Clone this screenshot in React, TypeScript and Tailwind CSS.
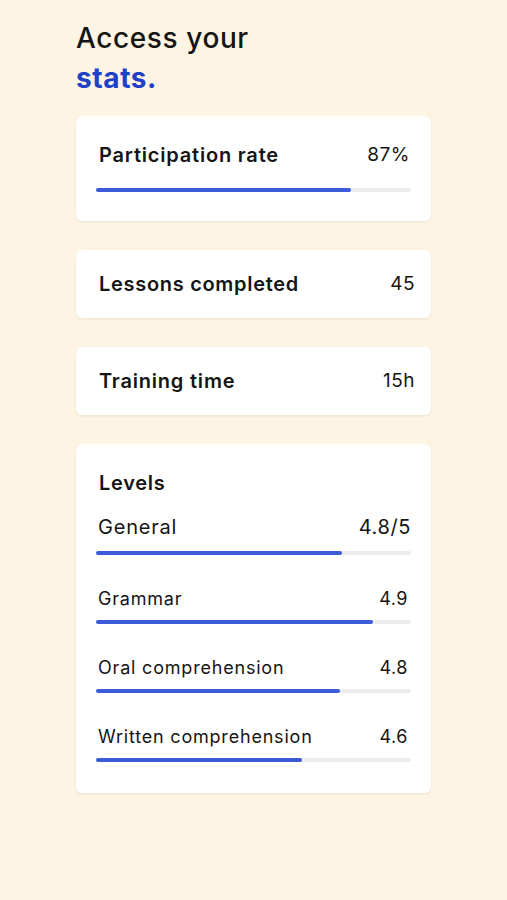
const levels = [
  { label: 'Grammar', value: '4.9', pct: 88 },
  { label: 'Oral comprehension', value: '4.8', pct: 77.5 },
  { label: 'Written comprehension', value: '4.6', pct: 65.5 },
];

const Bar = ({ pct }: { pct: number }) => (
  <div className="h-[4px] w-full rounded-full bg-[#ececec]">
    <div className="h-full rounded-full bg-[#3d5bd8]" style={{ width: `${pct}%` }} />
  </div>
);

export default function App() {
  return (
    <div className="min-h-[900px] bg-[#fdf4e3] font-['Inter',sans-serif] text-[#151515]">
      <div className="mx-auto w-[355px] pt-[18px]">
        <h1 className="text-[28px] leading-[40px] font-medium tracking-[0.6px]">
          Access your
          <br />
          <span className="font-bold text-[#2040c8]">stats.</span>
        </h1>

        <div className="mt-[18px] flex flex-col gap-[29px]">
          <div className="rounded-md bg-white px-[20px] pt-[27px] pb-[29px] shadow-[0_1px_3px_rgba(0,0,0,0.08)]">
            <div className="flex items-center justify-between pr-[1px] pl-[3px] leading-[24px]">
              <span className="text-[20px] font-semibold tracking-[0.8px]">Participation rate</span>
              <span className="text-[19px] tracking-[0.5px]">87%</span>
            </div>
            <div className="mt-[21px]">
              <Bar pct={81} />
            </div>
          </div>

          <div className="flex h-[68px] items-center justify-between rounded-md bg-white pr-[16px] pl-[23px] leading-[24px] shadow-[0_1px_3px_rgba(0,0,0,0.08)]">
            <span className="text-[20px] font-semibold tracking-[0.7px]">Lessons completed</span>
            <span className="text-[19px] tracking-[0.5px]">45</span>
          </div>

          <div className="flex h-[68px] items-center justify-between rounded-md bg-white pr-[16px] pl-[23px] leading-[24px] shadow-[0_1px_3px_rgba(0,0,0,0.08)]">
            <span className="text-[20px] font-semibold tracking-[0.8px]">Training time</span>
            <span className="text-[19px] tracking-[0.5px]">15h</span>
          </div>

          <div className="rounded-md bg-white px-[20px] pt-[27px] pb-[31px] shadow-[0_1px_3px_rgba(0,0,0,0.08)]">
            <div className="pl-[3px] text-[20px] leading-[24px] font-semibold tracking-[0.7px]">Levels</div>
            <div className="mt-[20px] flex items-center justify-between pl-[2px] leading-[24px]">
              <span className="text-[20px] tracking-[0.8px]">General</span>
              <span className="text-[20px] tracking-[0.6px]">4.8/5</span>
            </div>
            <div className="mt-[12px]">
              <Bar pct={78} />
            </div>
            {levels.map((l) => (
              <div key={l.label} className="mt-[33px]">
                <div className="flex items-center justify-between pr-[3px] pl-[2px] leading-[22px]">
                  <span className="text-[18px] tracking-[0.8px]">{l.label}</span>
                  <span className="text-[18px] tracking-[0.5px]">{l.value}</span>
                </div>
                <div className="mt-[10px]">
                  <Bar pct={l.pct} />
                </div>
              </div>
            ))}
          </div>
        </div>
      </div>
    </div>
  );
}
